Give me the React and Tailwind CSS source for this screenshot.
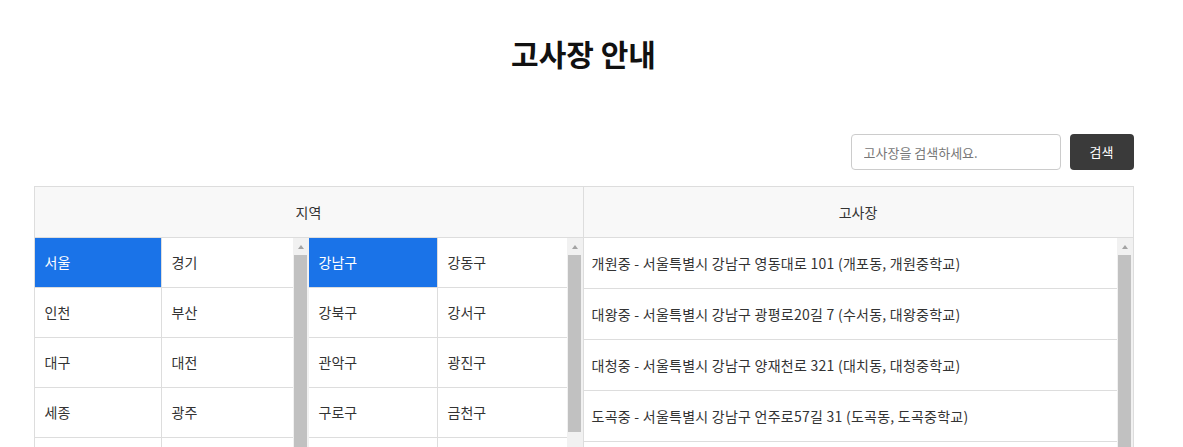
import {useState} from "react";

const regions = [
    ["서울", "경기"],
    ["인천", "부산"],
    ["대구", "대전"],
    ["세종", "광주"],
    ["울산", "강원"],
];

const districts = [
    ["강남구", "강동구"],
    ["강북구", "강서구"],
    ["관악구", "광진구"],
    ["구로구", "금천구"],
    ["노원구", "도봉구"],
];

const sites = [
    "개원중 - 서울특별시 강남구 영동대로 101 (개포동, 개원중학교)",
    "대왕중 - 서울특별시 강남구 광평로20길 7 (수서동, 대왕중학교)",
    "대청중 - 서울특별시 강남구 양재천로 321 (대치동, 대청중학교)",
    "도곡중 - 서울특별시 강남구 언주로57길 31 (도곡동, 도곡중학교)",
    "봉은중 - 서울특별시 강남구 봉은사로 633 (삼성동, 봉은중학교)",
];

// 가짜 스크롤바 (헤드리스 환경에서도 모양 유지)
const ScrollBar = ({thumb}) => (
    <div className="w-[16px] shrink-0 bg-[#f1f1f1] flex flex-col items-center">
        <div className="h-[17px] w-full flex items-center justify-center">
            <div className="w-0 h-0 border-l-[3.5px] border-r-[3.5px] border-b-[4px] border-l-transparent border-r-transparent border-b-[#a3a3a3]"/>
        </div>
        <div className={`w-[13px] bg-[#c1c1c1] ${thumb}`}/>
    </div>
);

const PairList = ({rows, selected, onSelect, thumb, cols}) => (
    <div className="flex-1 flex min-w-0">
        <div className="flex-1 overflow-hidden">
            {rows.map((pair, i) => (
                <div key={i} className={`grid ${cols} h-[50px] border-b border-[#ddd]`}>
                    {pair.map((name, j) => (
                        <div
                            key={name}
                            onClick={() => onSelect(name)}
                            className={`flex items-center px-2.5 cursor-pointer ${
                                j === 0 ? "border-r border-[#ddd]" : ""
                            } ${selected === name ? "bg-[#1a73e8] text-white" : "text-[#333]"}`}
                        >
                            {name}
                        </div>
                    ))}
                </div>
            ))}
        </div>
        <ScrollBar thumb={thumb}/>
    </div>
);

export default function App() {
    const [region, setRegion] = useState("서울");
    const [district, setDistrict] = useState("강남구");

    return (
        <div className="w-[1167px] bg-white text-[14px] text-[#333] font-['Noto_Sans_CJK_KR','Noto_Sans',sans-serif]">
            <div className="pt-[32px] text-center">
                <h1 className="text-[30px] leading-[42px] font-bold text-[#111]">고사장 안내</h1>
            </div>

            <div className="w-[1100px] mx-auto">
                {/* 검색 */}
                <div className="flex justify-end gap-[9px] mt-[60px] mb-4">
                    <input
                        className="w-[210px] h-[36px] border border-[#ccc] rounded px-3 text-[13px] placeholder:text-[#777] outline-none"
                        placeholder="고사장을 검색하세요."
                    />
                    <button className="w-[64px] h-[36px] rounded bg-[#3a3a3a] text-white text-[13px]">
                        검색
                    </button>
                </div>

                {/* 테이블 */}
                <div className="border border-[#ddd]">
                    <div className="grid grid-cols-2 h-[51px] bg-[#f8f8f8] border-b border-[#ddd]">
                        <div className="flex items-center justify-center border-r border-[#ddd]">지역</div>
                        <div className="flex items-center justify-center">고사장</div>
                    </div>
                    <div className="grid grid-cols-2 h-[250px]">
                        <div className="flex border-r border-[#ddd] overflow-hidden">
                            <PairList rows={regions} selected={region} onSelect={setRegion} thumb="h-[230px]" cols="grid-cols-[127px_1fr]"/>
                            <PairList rows={districts} selected={district} onSelect={setDistrict} thumb="h-[177px]" cols="grid-cols-[129px_1fr]"/>
                        </div>
                        <div className="flex overflow-hidden">
                            <div className="flex-1 overflow-hidden">
                                {sites.map((s) => (
                                    <div key={s} className="h-[51px] flex items-center px-2 border-b border-[#ddd] whitespace-nowrap tracking-[0.25px]">
                                        {s}
                                    </div>
                                ))}
                            </div>
                            <ScrollBar thumb="h-[225px]"/>
                        </div>
                    </div>
                </div>
            </div>
        </div>
    );
}
